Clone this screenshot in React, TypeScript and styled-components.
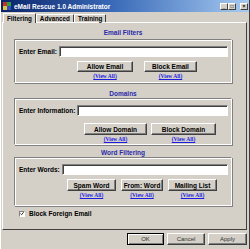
import React from "react";
import styled, { createGlobalStyle } from "styled-components";

const Global = createGlobalStyle`
  html, body { margin: 0; padding: 0; background: #d4d0c8; }
  * { box-sizing: border-box; }
`;

const Window = styled.div`
  width: 250px;
  height: 249px;
  background: #d4d0c8;
  display: flex;
  flex-direction: column;
  font-family: "Liberation Sans", Arial, sans-serif;
  border-left: 1px solid #fff;
  border-right: 1px solid #404040;
  overflow: hidden;
`;

const TitleBar = styled.div`
  height: 12px;
  background: linear-gradient(90deg, #0a246a 0%, #3a6ab8 45%, #a6caf0 100%);
  display: flex;
  align-items: center;
  padding: 0 1px 0 2px;
  gap: 3px;
`;

const TitleText = styled.span`
  color: #fff;
  font-weight: bold;
  font-size: 6.5px;
  flex: 1;
  white-space: nowrap;
`;

const CapBtn = styled.div`
  width: 8px;
  height: 7px;
  background: #d4d0c8;
  border: 1px solid;
  border-color: #fff #404040 #404040 #fff;
  display: flex;
  align-items: center;
  justify-content: center;
  font-size: 5px;
  font-weight: bold;
  line-height: 1;
  color: #000;
`;

const CapGroup = styled.div`
  display: flex;
  margin-right: 1px;
`;

const TabRow = styled.div`
  display: flex;
  align-items: flex-end;
  height: 10px;
  padding-left: 2px;
`;

const Tab = styled.div<{ $active?: boolean }>`
  height: ${(p) => (p.$active ? 10 : 8)}px;
  padding: 0 3px;
  display: flex;
  align-items: center;
  font-size: 6.3px;
  font-weight: bold;
  color: #000;
  background: #d4d0c8;
  border: 1px solid;
  border-bottom: none;
  border-color: #fff #404040 transparent #fff;
  border-radius: 1px 1px 0 0;
  margin-bottom: ${(p) => (p.$active ? -1 : 0)}px;
  position: relative;
  z-index: ${(p) => (p.$active ? 1 : 0)};
`;

const Panel = styled.div`
  height: 208px;
  margin: 0 2px 0 1px;
  border: 1px solid;
  border-color: #fff #404040 #404040 #fff;
  padding: 6px 14px 0 11px;
  display: flex;
  flex-direction: column;
`;

const Heading = styled.div<{ $mt?: number; $mb?: number }>`
  text-align: center;
  font-size: 6.5px;
  font-weight: bold;
  color: #2a2aa8;
  height: 8px;
  line-height: 8px;
  margin-top: ${(p) => p.$mt ?? 0}px;
  margin-bottom: ${(p) => p.$mb ?? 0}px;
`;

const Group = styled.div<{ $h: number }>`
  height: ${(p) => p.$h}px;
  border: 1px solid;
  border-color: #808080 #fff #fff #808080;
  box-shadow: inset 1px 1px 0 #fff, 1px 1px 0 #808080;
  padding: 6px 3px 0 4px;
  display: flex;
  flex-direction: column;
`;

const InputRow = styled.div`
  display: flex;
  align-items: center;
  gap: 2px;
`;

const Label = styled.span`
  font-size: 6.5px;
  font-weight: bold;
  color: #000;
  white-space: nowrap;
`;

const TextBox = styled.div`
  flex: 1;
  height: 11px;
  background: #fff;
  border: 1px solid;
  border-color: #808080 #fff #fff #808080;
  box-shadow: inset 1px 1px 0 #404040;
`;

const ButtonRow = styled.div<{ $left: number; $mt: number; $gap: number }>`
  display: flex;
  padding-left: ${(p) => p.$left}px;
  margin-top: ${(p) => p.$mt}px;
  gap: ${(p) => p.$gap}px;
`;

const BtnCol = styled.div<{ $w: number }>`
  width: ${(p) => p.$w}px;
  display: flex;
  flex-direction: column;
  align-items: center;
`;

const Button = styled.div<{ $h?: number }>`
  width: 100%;
  height: ${(p) => p.$h ?? 12}px;
  background: #d4d0c8;
  border: 1px solid;
  border-color: #fff #404040 #404040 #fff;
  box-shadow: inset -1px -1px 0 #808080;
  display: flex;
  align-items: center;
  justify-content: center;
  font-size: 6.5px;
  font-weight: bold;
  color: #000;
  white-space: nowrap;
`;

const ViewAll = styled.span`
  font-family: "Liberation Serif", "Times New Roman", serif;
  font-size: 5.5px;
  font-weight: bold;
  color: #1c1ce0;
  text-decoration: underline;
  line-height: 6px;
  margin-top: 1px;
  white-space: nowrap;
`;

const CheckRow = styled.div`
  display: flex;
  align-items: center;
  gap: 4px;
  margin-top: 4px;
  padding-left: 5px;
`;

const CheckBox = styled.div`
  width: 6px;
  height: 6px;
  background: #fff;
  border: 1px solid;
  border-color: #808080 #fff #fff #808080;
  display: flex;
  align-items: center;
  justify-content: center;
`;

const Footer = styled.div`
  flex: 1;
  display: flex;
  justify-content: flex-end;
  align-items: flex-start;
  padding: 3px 2px 0 0;
  gap: 3px;
`;

const DlgButton = styled.div<{ $w: number; $focus?: boolean }>`
  width: ${(p) => p.$w}px;
  height: 12px;
  background: #d4d0c8;
  border: 1px solid;
  border-color: ${(p) => (p.$focus ? "#000" : "#fff #404040 #404040 #fff")};
  box-shadow: ${(p) =>
    p.$focus ? "inset 1px 1px 0 #fff, inset -1px -1px 0 #808080" : "inset -1px -1px 0 #808080"};
  display: flex;
  align-items: center;
  justify-content: center;
  font-size: 6px;
  color: #303030;
`;

const AppIcon = () => (
  <svg width="8" height="8" viewBox="0 0 8 8">
    <rect x="0" y="0" width="4" height="4" fill="#c83020" />
    <rect x="4" y="0" width="4" height="4" fill="#30a040" />
    <rect x="0" y="4" width="4" height="4" fill="#e0c040" />
    <rect x="4" y="4" width="4" height="4" fill="#3050c0" />
  </svg>
);

const Check = () => (
  <svg width="5" height="5" viewBox="0 0 5 5">
    <path d="M0.5 2.5 L2 4 L4.5 0.8" stroke="#000" strokeWidth="1" fill="none" />
  </svg>
);

type B = { label: string; w: number };

const Buttons = ({ items, left, mt, gap, h }: { items: B[]; left: number; mt: number; gap: number; h: number }) => (
  <ButtonRow $left={left} $mt={mt} $gap={gap}>
    {items.map((b) => (
      <BtnCol key={b.label} $w={b.w}>
        <Button $h={h}>{b.label}</Button>
        <ViewAll>(View All)</ViewAll>
      </BtnCol>
    ))}
  </ButtonRow>
);

export default function App() {
  return (
    <>
      <Global />
      <Window>
        <TitleBar>
          <AppIcon />
          <TitleText>eMail Rescue 1.0 Administrator</TitleText>
          <CapGroup>
            <CapBtn>_</CapBtn>
            <CapBtn>□</CapBtn>
          </CapGroup>
          <CapBtn>×</CapBtn>
        </TitleBar>
        <TabRow>
          <Tab $active>Filtering</Tab>
          <Tab>Advanced</Tab>
          <Tab>Training</Tab>
        </TabRow>
        <Panel>
          <Heading $mb={2}>Email Filters</Heading>
          <Group $h={44}>
            <InputRow>
              <Label>Enter Email:</Label>
              <TextBox />
            </InputRow>
            <Buttons
              left={58}
              mt={4}
              gap={11}
              h={11}
              items={[
                { label: "Allow Email", w: 56 },
                { label: "Block Email", w: 53 },
              ]}
            />
          </Group>
          <Heading $mt={7}>Domains</Heading>
          <Group $h={47}>
            <InputRow>
              <Label>Enter Information:</Label>
              <TextBox />
            </InputRow>
            <Buttons
              left={65}
              mt={7}
              gap={4}
              h={12}
              items={[
                { label: "Allow Domain", w: 63 },
                { label: "Block Domain", w: 65 },
              ]}
            />
          </Group>
          <Heading $mt={4}>Word Filtering</Heading>
          <Group $h={49}>
            <InputRow>
              <Label>Enter Words:</Label>
              <TextBox />
            </InputRow>
            <Buttons
              left={48}
              mt={4}
              gap={5}
              h={12}
              items={[
                { label: "Spam Word", w: 49 },
                { label: "From: Word", w: 42 },
                { label: "Mailing List", w: 49 },
              ]}
            />
          </Group>
          <CheckRow>
            <CheckBox>
              <Check />
            </CheckBox>
            <Label>Block Foreign Email</Label>
          </CheckRow>
        </Panel>
        <Footer>
          <DlgButton $w={37} $focus>
            OK
          </DlgButton>
          <DlgButton $w={38}>Cancel</DlgButton>
          <DlgButton $w={39}>Apply</DlgButton>
        </Footer>
      </Window>
    </>
  );
}
